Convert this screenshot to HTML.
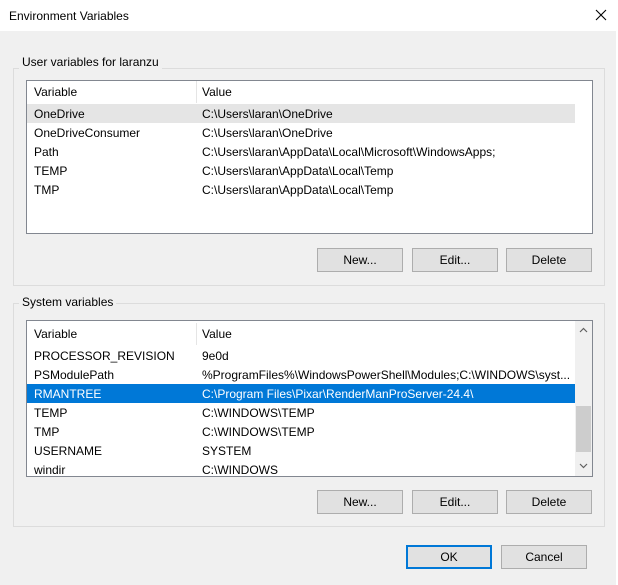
<!DOCTYPE html><html><head><style>
*{box-sizing:border-box;margin:0;padding:0}
body{width:618px;height:585px;background:#fff;font-family:"Liberation Sans",sans-serif;font-size:12px;color:#000;position:relative;overflow:hidden}
.dlg{position:absolute;left:0;top:0;width:616px;height:585px;background:#f0f0f0}
.title{position:absolute;left:0;top:0;width:616px;height:31px;background:#fff}
.title span{position:absolute;left:9px;top:9px;font-size:12px}
.x{position:absolute;left:594px;top:8px}
.gb{position:absolute;border:1px solid #dcdcdc}
.gl{position:absolute;background:#f0f0f0;padding:0 3px;font-size:12px}
.lb{position:absolute;left:26px;width:567px;background:#fff;border:1px solid #828790}
.hd{position:absolute;left:0;top:0;width:548px;height:22px;}
.hd span{position:absolute;top:4px}
.hd i{position:absolute;left:169px;top:0;width:1px;height:22px;background:#e5e5e5}
.r{position:absolute;left:0;width:548px;height:19px}
.r span{position:absolute;top:3px;white-space:nowrap}
.c1{left:7px}.c2{left:175px}
.btn{position:absolute;width:86px;height:24px;border:1px solid #adadad;background:#e1e1e1;text-align:center;line-height:22px}
</style></head><body>
<div class="dlg">
<div class="title"><span>Environment Variables</span>
<svg class="x" width="14" height="14"><path d="M2 2L12 12M12 2L2 12" stroke="#000" stroke-width="1.1"/></svg></div>

<div class="gb" style="left:13px;top:68px;width:592px;height:218px"></div>
<div class="gl" style="left:19px;top:55px">User variables for laranzu</div>
<div class="lb" style="top:80px;height:154px">
 <div class="hd"><span class="c1" style="position:absolute;left:7px">Variable</span><i></i><span style="left:175px">Value</span></div>
 <div class="r" style="top:23px;background:#e5e5e5"><span class="c1">OneDrive</span><span class="c2">C:\Users\laran\OneDrive</span></div>
 <div class="r" style="top:42px"><span class="c1">OneDriveConsumer</span><span class="c2">C:\Users\laran\OneDrive</span></div>
 <div class="r" style="top:61px"><span class="c1">Path</span><span class="c2">C:\Users\laran\AppData\Local\Microsoft\WindowsApps;</span></div>
 <div class="r" style="top:80px"><span class="c1">TEMP</span><span class="c2">C:\Users\laran\AppData\Local\Temp</span></div>
 <div class="r" style="top:99px"><span class="c1">TMP</span><span class="c2">C:\Users\laran\AppData\Local\Temp</span></div>
</div>
<div class="btn" style="left:317px;top:248px">New...</div>
<div class="btn" style="left:412px;top:248px">Edit...</div>
<div class="btn" style="left:506px;top:248px">Delete</div>

<div class="gb" style="left:13px;top:303px;width:592px;height:224px"></div>
<div class="gl" style="left:19px;top:295px">System variables</div>
<div class="lb" style="top:320px;height:157px;overflow:hidden">
 <div class="hd" style="top:2px"><span style="left:7px">Variable</span><i></i><span style="left:175px">Value</span></div>
 <div class="r" style="top:25px"><span class="c1">PROCESSOR_REVISION</span><span class="c2">9e0d</span></div>
 <div class="r" style="top:44px"><span class="c1">PSModulePath</span><span class="c2">%ProgramFiles%\WindowsPowerShell\Modules;C:\WINDOWS\syst...</span></div>
 <div class="r" style="top:63px;background:#0078d7;color:#fff"><span class="c1">RMANTREE</span><span class="c2">C:\Program Files\Pixar\RenderManProServer-24.4\</span></div>
 <div class="r" style="top:82px"><span class="c1">TEMP</span><span class="c2">C:\WINDOWS\TEMP</span></div>
 <div class="r" style="top:101px"><span class="c1">TMP</span><span class="c2">C:\WINDOWS\TEMP</span></div>
 <div class="r" style="top:120px"><span class="c1">USERNAME</span><span class="c2">SYSTEM</span></div>
 <div class="r" style="top:139px"><span class="c1">windir</span><span class="c2">C:\WINDOWS</span></div>
 <div style="position:absolute;left:548px;top:0;width:17px;height:155px;background:#f0f0f0">
  <div style="position:absolute;left:1px;top:85px;width:15px;height:46px;background:#cdcdcd"></div>
  <svg style="position:absolute;left:4px;top:6px" width="9" height="6"><path d="M1 5L4.5 1.5L8 5" fill="none" stroke="#606060" stroke-width="1.2"/></svg>
  <svg style="position:absolute;left:4px;top:142px" width="9" height="6"><path d="M1 1L4.5 4.5L8 1" fill="none" stroke="#606060" stroke-width="1.2"/></svg>
 </div>
</div>
<div class="btn" style="left:317px;top:490px">New...</div>
<div class="btn" style="left:412px;top:490px">Edit...</div>
<div class="btn" style="left:506px;top:490px">Delete</div>

<div class="btn" style="left:406px;top:545px;border:2px solid #0078d7;line-height:20px">OK</div>
<div class="btn" style="left:501px;top:545px">Cancel</div>
</div>
</body></html>
